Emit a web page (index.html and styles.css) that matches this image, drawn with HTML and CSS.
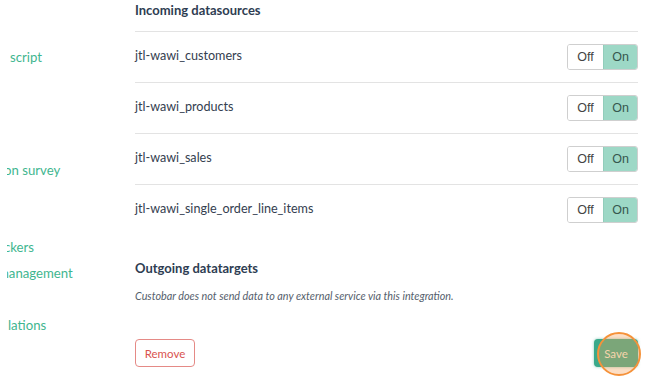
FILE: index.html
```html
<!DOCTYPE html>
<html lang="en">
<head>
    <meta charset="UTF-8">
    <meta name="viewport" content="width=device-width, initial-scale=1.0">
    <title>Integration settings</title>
    <link rel="stylesheet" href="styles.css">
</head>
<body>
    <div class="page">
        <nav class="sidebar">
            <a class="nav-link first" href="#">script</a>
            <a class="nav-link survey" href="#">on survey</a>
            <a class="nav-link trackers" href="#">ckers</a>
            <a class="nav-link manage" href="#">management</a>
            <a class="nav-link relations" href="#">lations</a>
        </nav>

        <main class="content">
            <h3 class="section-title">Incoming datasources</h3>
            <div class="source-list">
                <div class="source-row">
                    <span class="source-name">jtl-wawi_customers</span>
                    <div class="toggle">
                        <span class="toggle-off">Off</span>
                        <span class="toggle-on">On</span>
                    </div>
                </div>
                <div class="source-row">
                    <span class="source-name">jtl-wawi_products</span>
                    <div class="toggle">
                        <span class="toggle-off">Off</span>
                        <span class="toggle-on">On</span>
                    </div>
                </div>
                <div class="source-row">
                    <span class="source-name">jtl-wawi_sales</span>
                    <div class="toggle">
                        <span class="toggle-off">Off</span>
                        <span class="toggle-on">On</span>
                    </div>
                </div>
                <div class="source-row">
                    <span class="source-name">jtl-wawi_single_order_line_items</span>
                    <div class="toggle">
                        <span class="toggle-off">Off</span>
                        <span class="toggle-on">On</span>
                    </div>
                </div>
            </div>

            <h3 class="section-title outgoing">Outgoing datatargets</h3>
            <p class="note">Custobar does not send data to any external service via this integration.</p>

            <div class="actions">
                <button class="btn btn-remove" type="button">Remove</button>
                <div class="save-wrap">
                    <button class="btn btn-save" type="button">Save</button>
                    <span class="click-marker"></span>
                </div>
            </div>
        </main>
    </div>
</body>
</html>
```

FILE: styles.css
```css
body {
    margin: 0;
    font-family: Lato, "Open Sans", sans-serif;
    background-color: #fff;
    color: #34404f;
    overflow: hidden;
}
.page {
    display: flex;
    height: 392px;
}
.sidebar {
    width: 128px;
    margin-left: 7px;
    flex-shrink: 0;
    display: flex;
    flex-direction: column;
    overflow: hidden;
    padding-top: 44px;
}
.nav-link {
    display: block;
    height: 26px;
    line-height: 26px;
    font-size: 13.2px;
    color: #3fb68f;
    text-decoration: none;
    white-space: nowrap;
    margin-left: 3px;
}
.nav-link.survey {
    margin-top: 87px;
    margin-left: -3px;
}
.nav-link.trackers {
    margin-top: 51px;
    margin-left: -3px;
}
.nav-link.manage {
    margin-left: -9px;
}
.nav-link.relations {
    margin-top: 26px;
    margin-left: 1px;
}
.content {
    flex: 1;
    padding-right: 32px;
}
.section-title {
    margin: 0 0 11px;
    font-size: 13px;
    line-height: 20px;
    font-weight: 700;
    color: #2e3d52;
}
.source-row {
    display: flex;
    justify-content: space-between;
    align-items: center;
    border-top: 1px solid #e3e3e3;
    padding: 12px 0;
}
.source-name {
    font-size: 12.6px;
    padding-bottom: 3px;
    color: #34404f;
}
.toggle {
    display: flex;
    height: 26px;
    border: 1px solid #cfcfcf;
    border-radius: 3px;
    box-sizing: border-box;
    overflow: hidden;
    font-family: "Liberation Sans", Arial, sans-serif;
    font-size: 12.5px;
}
.toggle-off, .toggle-on {
    display: flex;
    align-items: center;
    justify-content: center;
}
.toggle-off {
    width: 35px;
    color: #444;
    background-color: #fff;
}
.toggle-on {
    width: 33px;
    color: #36574e;
    background-color: #9dd8c6;
    border-left: 1px solid #92cdbb;
}
.section-title.outgoing {
    margin: 23px 0 9px;
}
.note {
    margin: 0;
    font-size: 10.8px;
    line-height: 18px;
    font-style: italic;
    color: #55606c;
}
.actions {
    display: flex;
    justify-content: space-between;
    margin-top: 34px;
}
.btn {
    height: 28px;
    border-radius: 4px;
    font-family: Lato, sans-serif;
    font-size: 11.5px;
    padding: 0;
    cursor: pointer;
}
.btn-remove {
    width: 60px;
    background-color: #fff;
    color: #d9534f;
    border: 1px solid #e58a86;
}
.save-wrap {
    position: relative;
}
.btn-save {
    width: 44px;
    background-color: #3aa98a;
    color: #f5efd8;
    border: none;
    box-shadow: 0 0 3px rgba(58, 169, 138, 0.6);
}
.click-marker {
    position: absolute;
    left: 3px;
    top: -7px;
    width: 40px;
    height: 40px;
    border: 2px solid #f5923a;
    border-radius: 50%;
    background-color: rgba(245, 160, 90, 0.35);
}
```
